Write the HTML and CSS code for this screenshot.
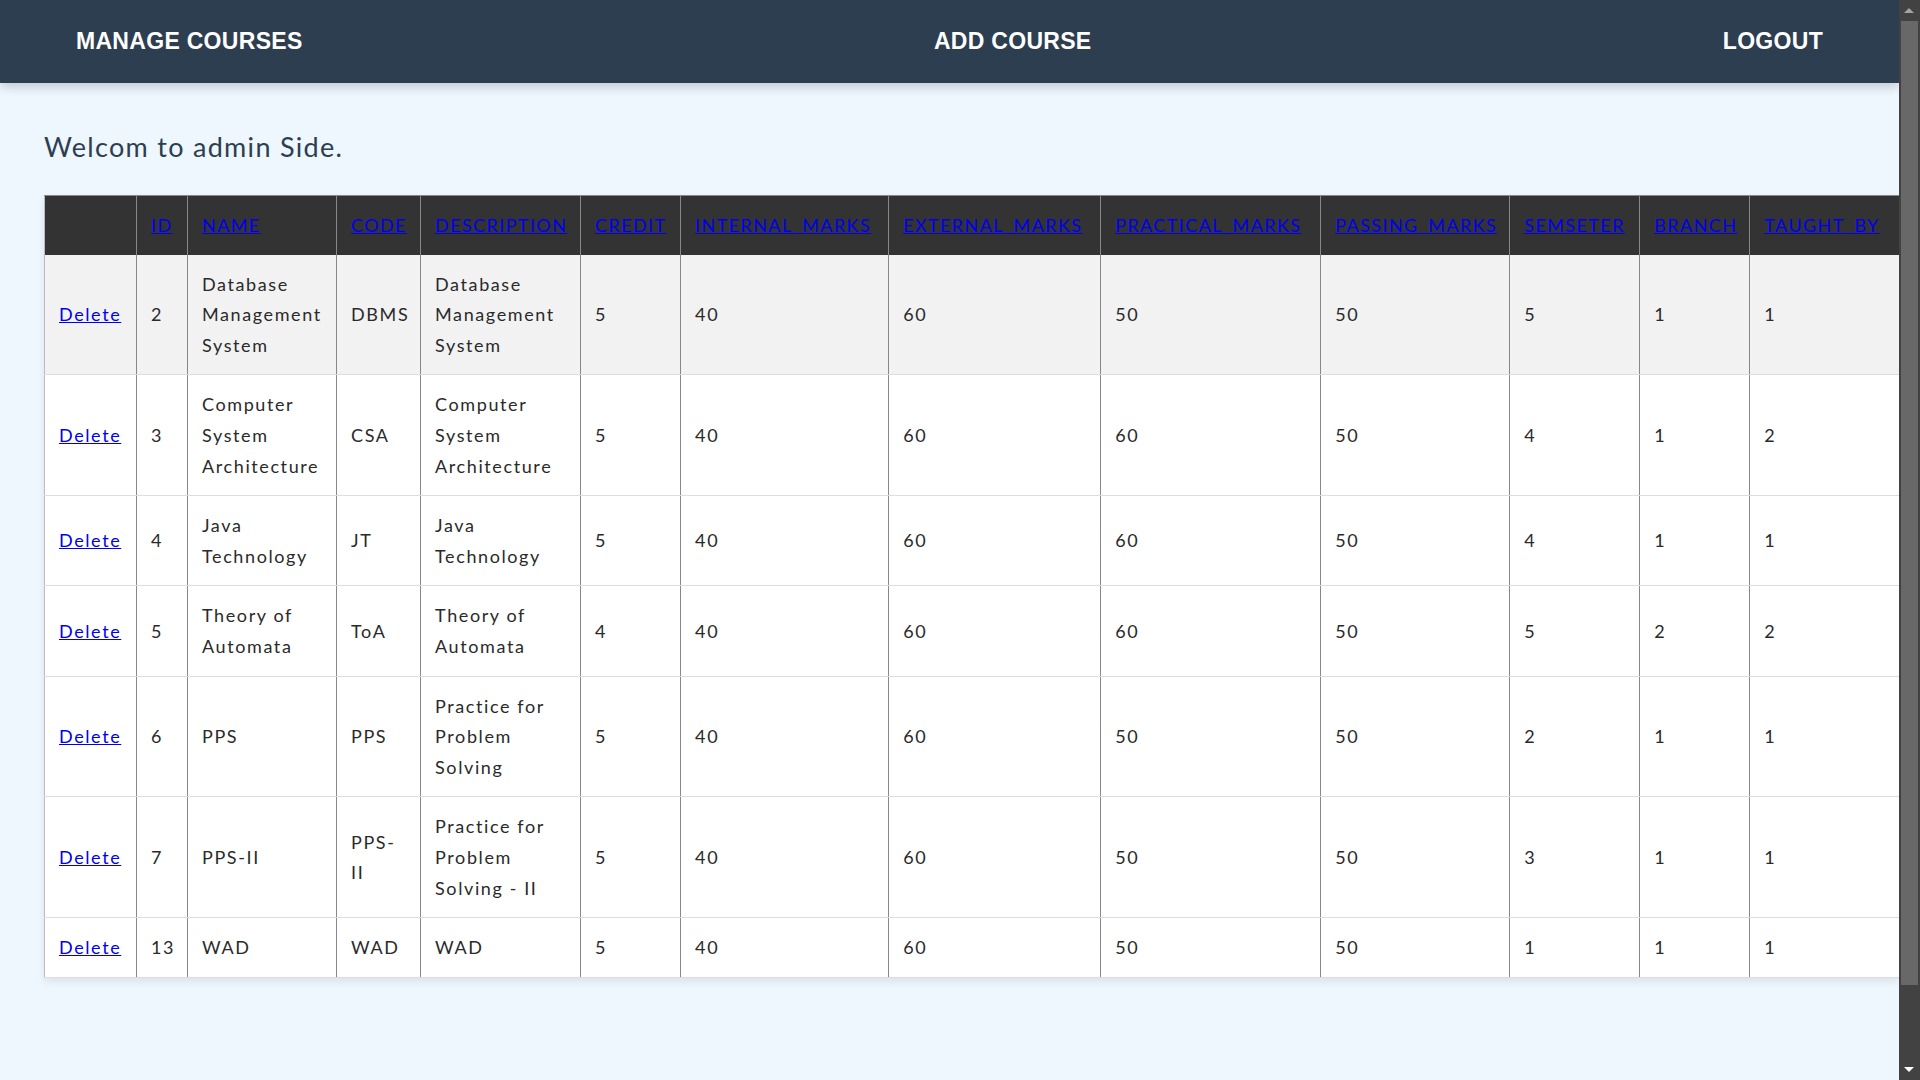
FILE: index.html
```html
<!DOCTYPE html>
<html lang="en">
<head>
<meta charset="utf-8">
<title>Admin - Manage Courses</title>
<link rel="stylesheet" href="styles.css">
</head>
<body>
<div class="page">
<nav class="topnav">
  <a class="nav-link" href="#">MANAGE COURSES</a>
  <a class="nav-link" href="#">ADD COURSE</a>
  <a class="nav-link" href="#">LOGOUT</a>
</nav>
<main class="content">
  <h2 class="welcome">Welcom to admin Side.</h2>
  <table class="courses">
    <colgroup>
      <col class="c-act"><col class="c-id"><col class="c-name"><col class="c-code"><col class="c-desc"><col class="c-credit"><col class="c-int"><col class="c-ext"><col class="c-prac"><col class="c-pass"><col class="c-sem"><col class="c-branch"><col class="c-taught">
    </colgroup>
    <thead>
      <tr>
        <th></th>
        <th><a href="#">ID</a></th>
        <th><a href="#">NAME</a></th>
        <th><a href="#">CODE</a></th>
        <th><a href="#">DESCRIPTION</a></th>
        <th><a href="#">CREDIT</a></th>
        <th><a href="#">INTERNAL_MARKS</a></th>
        <th><a href="#">EXTERNAL_MARKS</a></th>
        <th><a href="#">PRACTICAL_MARKS</a></th>
        <th><a href="#">PASSING_MARKS</a></th>
        <th><a href="#">SEMSETER</a></th>
        <th><a href="#">BRANCH</a></th>
        <th><a href="#">TAUGHT_BY</a></th>
      </tr>
    </thead>
    <tbody>
      <tr class="hl">
        <td><a href="#">Delete</a></td><td>2</td><td>Database Management System</td><td>DBMS</td><td>Database Management System</td><td>5</td><td>40</td><td>60</td><td>50</td><td>50</td><td>5</td><td>1</td><td>1</td>
      </tr>
      <tr>
        <td><a href="#">Delete</a></td><td>3</td><td>Computer System Architecture</td><td>CSA</td><td>Computer System Architecture</td><td>5</td><td>40</td><td>60</td><td>60</td><td>50</td><td>4</td><td>1</td><td>2</td>
      </tr>
      <tr>
        <td><a href="#">Delete</a></td><td>4</td><td>Java Technology</td><td>JT</td><td>Java Technology</td><td>5</td><td>40</td><td>60</td><td>60</td><td>50</td><td>4</td><td>1</td><td>1</td>
      </tr>
      <tr>
        <td><a href="#">Delete</a></td><td>5</td><td>Theory of Automata</td><td>ToA</td><td>Theory of Automata</td><td>4</td><td>40</td><td>60</td><td>60</td><td>50</td><td>5</td><td>2</td><td>2</td>
      </tr>
      <tr>
        <td><a href="#">Delete</a></td><td>6</td><td>PPS</td><td>PPS</td><td>Practice for Problem Solving</td><td>5</td><td>40</td><td>60</td><td>50</td><td>50</td><td>2</td><td>1</td><td>1</td>
      </tr>
      <tr>
        <td><a href="#">Delete</a></td><td>7</td><td>PPS-II</td><td>PPS-<br>II</td><td>Practice for Problem Solving - II</td><td>5</td><td>40</td><td>60</td><td>50</td><td>50</td><td>3</td><td>1</td><td>1</td>
      </tr>
      <tr>
        <td><a href="#">Delete</a></td><td>13</td><td>WAD</td><td>WAD</td><td>WAD</td><td>5</td><td>40</td><td>60</td><td>50</td><td>50</td><td>1</td><td>1</td><td>1</td>
      </tr>
    </tbody>
  </table>
</main>
</div>
<div class="scrollbar" aria-hidden="true">
  <span class="sb-arrow sb-up"></span>
  <span class="sb-thumb"></span>
  <span class="sb-arrow sb-down"></span>
</div>
</body>
</html>
```
FILE: styles.css
```css
* { box-sizing: border-box; }

body {
  margin: 0;
  background: #eef6fe;
  font-family: Lato, "Open Sans", sans-serif;
  color: #333;
}

.page {
  margin-right: 21px;
}

/* fake browser scrollbar (overlay) */
.scrollbar {
  position: fixed;
  top: 0;
  right: 0;
  width: 21px;
  height: 100vh;
  background: #424242;
  z-index: 10;
}
.sb-thumb {
  position: absolute;
  top: 21px;
  left: 2px;
  width: 17px;
  height: 964px;
  background: #686868;
}
.sb-arrow {
  position: absolute;
  left: 5px;
  width: 0;
  height: 0;
  border-left: 5px solid transparent;
  border-right: 5px solid transparent;
}
.sb-up {
  top: 8px;
  border-bottom: 5px solid #a3a3a3;
}
.sb-down {
  bottom: 8px;
  border-top: 5px solid #ffffff;
}

.topnav {
  height: 83px;
  background: #2d3e50;
  display: flex;
  align-items: center;
  justify-content: space-between;
  padding: 0 76px 0 76px;
  box-shadow: 0 4px 10px rgba(0, 0, 0, 0.18);
  position: relative;
}

.nav-link {
  font-family: "Liberation Sans", Arial, sans-serif;
  font-weight: bold;
  font-size: 23px;
  letter-spacing: 0.3px;
  color: #fff;
  text-decoration: none;
}

.content {
  padding: 0 0 185px 44px;
}

.welcome {
  margin: 0;
  padding: 48px 0 32px;
  font-size: 27px;
  font-weight: normal;
  letter-spacing: 1.3px;
  line-height: 32px;
  color: #2c3e50;
}

.courses {
  table-layout: fixed;
  width: 1855px;
  border-collapse: collapse;
  font-size: 18px;
  letter-spacing: 1.6px;
  line-height: 30.6px;
  box-shadow: 0 4px 8px rgba(0, 0, 0, 0.08);
  background: #fff;
}

.c-act { width: 92px; }
.c-id { width: 51px; }
.c-name { width: 149px; }
.c-code { width: 84px; }
.c-desc { width: 160px; }
.c-credit { width: 100px; }
.c-int { width: 208px; }
.c-ext { width: 212px; }
.c-prac { width: 220px; }
.c-pass { width: 189px; }
.c-sem { width: 130px; }
.c-branch { width: 110px; }
.c-taught { width: 149px; }

.courses th,
.courses td {
  padding: 14px 8px 14px 14px;
  text-align: left;
  vertical-align: middle;
  border-left: 1px solid #888;
  word-wrap: break-word;
}

.courses th {
  background: #333;
  font-weight: normal;
  letter-spacing: 1.4px;
  border-top: 1px solid #888;
}

.courses td {
  border-bottom: 1px solid #ddd;
  color: #2a2a2a;
}

.courses tr > :first-child { border-left: 1px solid #bbb; }

.courses tbody tr.hl td { background: #f2f2f2; }

.courses a {
  color: #0000ee;
  text-decoration: underline;
}
```
